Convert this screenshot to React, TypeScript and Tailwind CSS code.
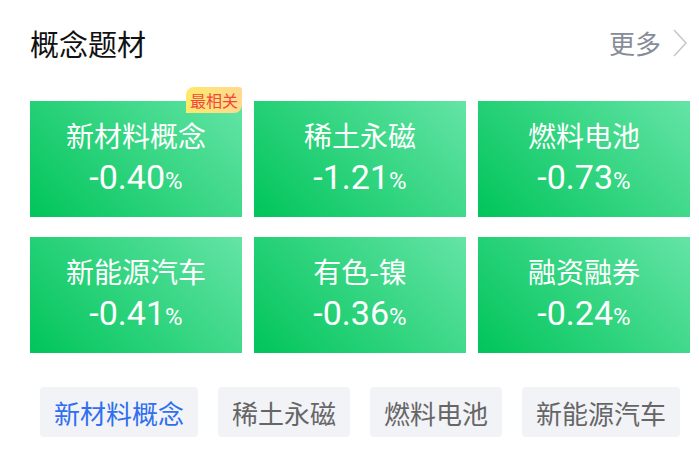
interface Concept {
  name: string;
  change: string;
  top?: boolean;
}

const CONCEPTS: Concept[] = [
  { name: '新材料概念', change: '-0.40', top: true },
  { name: '稀土永磁', change: '-1.21' },
  { name: '燃料电池', change: '-0.73' },
  { name: '新能源汽车', change: '-0.41' },
  { name: '有色-镍', change: '-0.36' },
  { name: '融资融券', change: '-0.24' },
];

const TAGS = ['新材料概念', '稀土永磁', '燃料电池', '新能源汽车'];

const CJK = "font-['Noto_Sans_CJK_SC',sans-serif]";

function ConceptCard({ item }: { item: Concept }) {
  return (
    <div className="relative flex h-[116px] flex-col items-center bg-[linear-gradient(45deg,#00c55a,#64e4a6)] pt-[16px] text-white">
      {item.top && (
        <span className="absolute -top-[14px] right-0 flex h-[26px] w-[56px] items-center justify-center rounded-tl-[8px] rounded-tr-[3px] rounded-br-[8px] bg-[linear-gradient(to_right,#ffe96c,#ffd98e)] text-[16px] leading-none text-[#f2453f]">
          最相关
        </span>
      )}
      <div className="text-[28px] leading-[36px]">{item.name}</div>
      <div className="mt-[3px] font-['Roboto',sans-serif] text-[34px] leading-[42px]">
        {item.change}
        <span className="text-[24px]">%</span>
      </div>
    </div>
  );
}

export default function App() {
  return (
    <div className={`h-[452px] w-[699px] bg-white pl-[30px] pr-[9px] ${CJK}`}>
      <div className="flex items-center justify-between pt-[23px]">
        <h3 className="text-[29px] leading-[40px] text-[#111]">概念题材</h3>
        <button type="button" className="flex items-center text-[26px] leading-[40px] text-[#878c99]">
          更多
          <svg className="ml-[12px] mr-[3px]" width="14" height="28" viewBox="0 0 14 28" fill="none">
            <path d="M1 1 L13 14 L1 27" stroke="#c6c7cb" strokeWidth="1.6" />
          </svg>
        </button>
      </div>

      <div className="mt-[38px] grid grid-cols-3 gap-x-[12px] gap-y-[20px]">
        {CONCEPTS.map((c) => (
          <ConceptCard key={c.name} item={c} />
        ))}
      </div>

      <div className="ml-[10px] mt-[34px] flex gap-[20px]">
        {TAGS.map((t, i) => (
          <span
            key={t}
            className={`flex h-[50px] items-center rounded-[4px] bg-[#f2f3f7] px-[14px] text-[26px] ${
              i === 0 ? 'text-[#2f6ff0]' : 'text-[#666]'
            }`}
          >
            {t}
          </span>
        ))}
      </div>
    </div>
  );
}
